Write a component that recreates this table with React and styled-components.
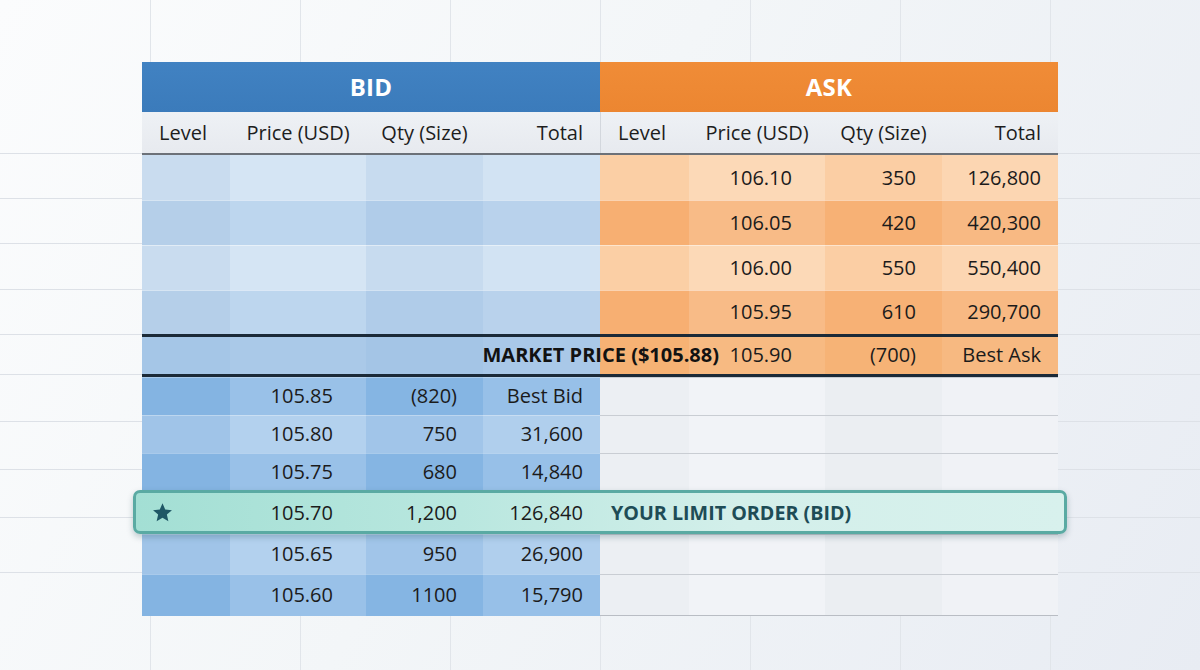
import React from "react";
import styled, { createGlobalStyle } from "styled-components";

const COLS = "88px 136px 117px 117px 89px 136px 117px 116px";

const GlobalStyle = createGlobalStyle`
  html, body {
    margin: 0;
    padding: 0;
  }
  body {
    font-family: "Open Sans", "Noto Sans", sans-serif;
    color: #1b1b1b;
  }
`;

const hLine = (y) => `linear-gradient(#dde1e7, #dde1e7) 0 ${y}px / 100% 1px no-repeat`;

const Page = styled.div`
  width: 1200px;
  height: 670px;
  box-sizing: border-box;
  padding-top: 62px;
  display: flex;
  justify-content: center;
  overflow: hidden;
  background:
    ${[153, 198, 243, 289, 334, 374, 421, 469, 517, 572].map(hLine).join(",\n    ")},
    repeating-linear-gradient(90deg, transparent 0 149px, #e1e5ea 149px 150px) 1px 0 / 1050px 100% no-repeat,
    linear-gradient(120deg, #fbfcfd 0%, #f3f6f8 45%, #e8ecf3 100%);
`;

const Book = styled.div`
  width: 916px;
  display: flex;
  flex-direction: column;
`;

const SideBand = styled.div`
  display: grid;
  grid-template-columns: 458px 458px;
  height: 50px;
`;

const SideTitle = styled.div`
  display: flex;
  align-items: center;
  justify-content: center;
  padding-bottom: 2px;
  color: #fff;
  font-size: 24px;
  font-weight: 700;
  letter-spacing: 0.2px;
  background: ${(p) =>
    p.$side === "bid"
      ? "linear-gradient(180deg, #4182c2, #3b7bbb)"
      : "linear-gradient(180deg, #f08c37, #ec8631)"};
`;

const HeadRow = styled.div`
  display: grid;
  grid-template-columns: ${COLS};
  height: 41px;
  background: linear-gradient(180deg, #eef1f5, #e7eaef);
  border-bottom: 2px solid #6c7178;
`;

const HeadCell = styled.div`
  display: flex;
  align-items: center;
  justify-content: ${(p) => (p.$right ? "flex-end" : "center")};
  padding-right: ${(p) => (p.$right ? "17px" : "0")};
  margin-right: ${(p) => (p.$level ? "6px" : "0")};
  font-size: 20px;
  color: #1d1d1d;
  border-left: ${(p) => (p.$split ? "1px solid #d3d7dd" : "none")};
`;

const Row = styled.div`
  display: grid;
  grid-template-columns: ${COLS};
  height: ${(p) => p.$h}px;
`;

const Cell = styled.div`
  display: flex;
  align-items: center;
  justify-content: ${(p) => (p.$pad ? "flex-end" : "flex-start")};
  padding-right: ${(p) => p.$pad || 0}px;
  padding-bottom: 2px;
  font-size: 20px;
  color: #1b1b1b;
  background: ${(p) => p.$bg};
  border-top: 1px solid ${(p) => p.$line};
  border-bottom: ${(p) => (p.$last ? "1px solid #b9bdc4" : "none")};
`;

const MarketRow = styled.div`
  display: grid;
  grid-template-columns: ${COLS};
  height: 43px;
  box-sizing: border-box;
  border-top: 3px solid #1b2a38;
  border-bottom: 3px solid #1b2a38;
`;

const MarketCell = styled(Cell)`
  grid-row: 1;
  grid-column: ${(p) => p.$col};
  border-top: none;
`;

const MarketLabel = styled.div`
  grid-row: 1;
  grid-column: 1 / 7;
  justify-self: end;
  align-self: center;
  margin-right: 106px;
  padding-bottom: 2px;
  font-size: 20px;
  font-weight: 700;
  color: #121212;
  z-index: 1;
`;

const LimitRow = styled.div`
  position: relative;
  z-index: 2;
  display: grid;
  grid-template-columns: ${COLS};
  height: 44px;
  box-sizing: border-box;
  margin: 0 -9px;
  padding: 0 6px;
  border: 3px solid #5aaaa3;
  border-radius: 7px;
  background: linear-gradient(90deg, #a3dfd4 0%, #b9e7df 35%, #d3efea 65%, #d8f1ed 100%);
  box-shadow: 0 3px 6px rgba(20, 60, 70, 0.25);
`;

const LimitCell = styled.div`
  display: flex;
  align-items: center;
  justify-content: ${(p) => (p.$pad ? "flex-end" : "flex-start")};
  padding-right: ${(p) => p.$pad || 0}px;
  padding-left: ${(p) => p.$left || 0}px;
  font-size: 20px;
  color: #1b1b1b;
`;

const LimitLabel = styled.div`
  grid-column: 5 / 9;
  display: flex;
  align-items: center;
  padding-left: 11px;
  font-size: 19.7px;
  font-weight: 700;
  color: #1e4c56;
`;

const Star = () => (
  <svg width="21" height="21" viewBox="0 0 24 24">
    <polygon
      points="12,1.5 15.1,8.6 22.8,9.3 17,14.4 18.7,22 12,18 5.3,22 7,14.4 1.2,9.3 8.9,8.6"
      fill="#1f5766"
    />
  </svg>
);

const PAD = [0, 33, 26, 17];

const pal = {
  bidLight: ["#c9dcef", "#d5e5f4", "#c7dbef", "#d2e3f3"],
  bidDark: ["#b5cfe9", "#bdd6ee", "#b0cce9", "#b9d2ec"],
  askLight: ["#fbcfa5", "#fcd9b7", "#fbcea4", "#fcd6b2"],
  askDark: ["#f7af72", "#f8bb87", "#f7b175", "#f8b983"],
  mktBid: ["#a5c6e7", "#aac9e8", "#a4c5e6", "#a9c8e8"],
  mktAsk: ["#f6b274", "#f7ba82", "#f6b376", "#f7b981"],
  lowDark: ["#84b4e2", "#99c1e8", "#85b5e3", "#97c0e8"],
  lowLight: ["#a0c4e8", "#b3d1ee", "#a1c5e9", "#b0cfed"],
  gray: ["#eceff3", "#f1f3f7", "#ebeef2", "#f0f2f6"],
};

const asks = [
  { h: 45, bid: "bidLight", ask: "askLight", vals: ["", "106.10", "350", "126,800"] },
  { h: 45, bid: "bidDark", ask: "askDark", vals: ["", "106.05", "420", "420,300"] },
  { h: 45, bid: "bidLight", ask: "askLight", vals: ["", "106.00", "550", "550,400"] },
  { h: 44, bid: "bidDark", ask: "askDark", vals: ["", "105.95", "610", "290,700"] },
];

const bidsAbove = [
  { h: 38, tone: "lowDark", vals: ["", "105.85", "(820)", "Best Bid"] },
  { h: 38, tone: "lowLight", vals: ["", "105.80", "750", "31,600"] },
  { h: 37, tone: "lowDark", vals: ["", "105.75", "680", "14,840"] },
];

const bidsBelow = [
  { h: 40, tone: "lowLight", vals: ["", "105.65", "950", "26,900"] },
  { h: 42, tone: "lowDark", vals: ["", "105.60", "1100", "15,790"], last: true },
];

const heads = ["Level", "Price (USD)", "Qty (Size)", "Total"];

const BidRow = ({ r }) => (
  <Row $h={r.h}>
    {r.vals.map((v, i) => (
      <Cell key={"b" + i} $bg={pal[r.tone][i]} $pad={PAD[i]} $line="rgba(255,255,255,0.3)">
        {v}
      </Cell>
    ))}
    {pal.gray.map((c, i) => (
      <Cell key={"a" + i} $bg={c} $line="#c9cdd3" $last={r.last} />
    ))}
  </Row>
);

const App = () => {
  return (
    <Page>
      <GlobalStyle />
      <Book>
        <SideBand>
          <SideTitle $side="bid">BID</SideTitle>
          <SideTitle $side="ask">ASK</SideTitle>
        </SideBand>
        <HeadRow>
          {[...heads, ...heads].map((h, i) => (
            <HeadCell key={i} $right={i % 4 === 3} $level={i % 4 === 0} $split={i === 4}>
              {h}
            </HeadCell>
          ))}
        </HeadRow>

        {asks.map((r, ri) => (
          <Row key={ri} $h={r.h}>
            {pal[r.bid].map((c, i) => (
              <Cell key={"b" + i} $bg={c} $line={ri ? "rgba(255,255,255,0.45)" : "transparent"} />
            ))}
            {r.vals.map((v, i) => (
              <Cell
                key={"a" + i}
                $bg={pal[r.ask][i]}
                $pad={PAD[i]}
                $line={ri ? "rgba(255,255,255,0.45)" : "transparent"}
              >
                {v}
              </Cell>
            ))}
          </Row>
        ))}

        <MarketRow>
          {pal.mktBid.map((c, i) => (
            <MarketCell key={"b" + i} $col={i + 1} $bg={c} />
          ))}
          {["", "105.90", "(700)", "Best Ask"].map((v, i) => (
            <MarketCell key={"a" + i} $col={i + 5} $bg={pal.mktAsk[i]} $pad={PAD[i]}>
              {v}
            </MarketCell>
          ))}
          <MarketLabel>MARKET PRICE ($105.88)</MarketLabel>
        </MarketRow>

        {bidsAbove.map((r, i) => (
          <BidRow key={i} r={r} />
        ))}

        <LimitRow>
          <LimitCell $left={10}>
            <Star />
          </LimitCell>
          <LimitCell $pad={33}>105.70</LimitCell>
          <LimitCell $pad={26}>1,200</LimitCell>
          <LimitCell $pad={17}>126,840</LimitCell>
          <LimitLabel>YOUR LIMIT ORDER (BID)</LimitLabel>
        </LimitRow>

        {bidsBelow.map((r, i) => (
          <BidRow key={i} r={r} />
        ))}
      </Book>
    </Page>
  );
};

export default App;
